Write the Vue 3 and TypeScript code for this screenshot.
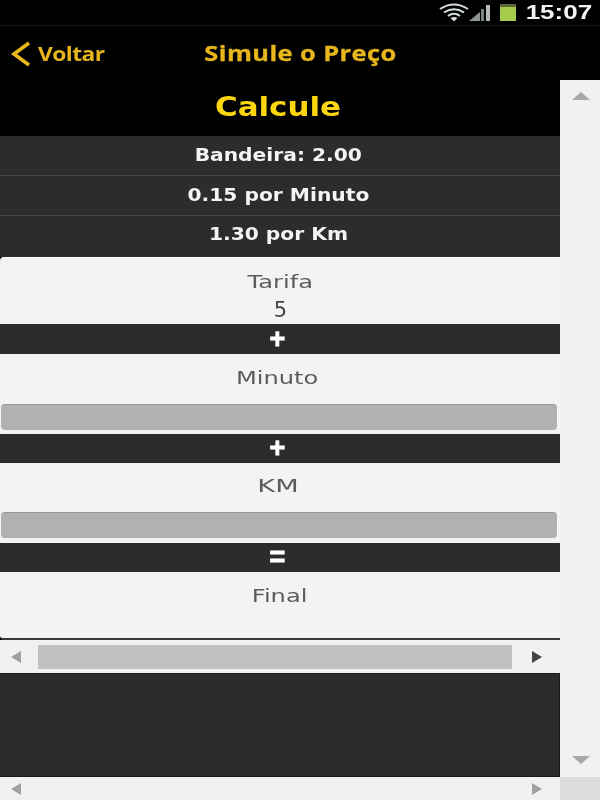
<script setup lang="ts">
const rates: string[] = ['Bandeira: 2.00', '0.15 por Minuto', '1.30 por Km']
</script>

<template>
  <div class="page">
    <div class="status">
      <svg class="wifi" width="30" height="19" viewBox="0 0 30 19" fill="none" stroke="#d5dcdc" stroke-width="2">
        <path d="M1 6 Q15 -3 29 6" />
        <path d="M5 9.500 Q15 3 25 9.500" />
        <path d="M9 13 Q15 8.500 21 13" />
        <path d="M15 18.500 L11.500 15 Q15 13 18.500 15 Z" fill="#d5dcdc" stroke="none" />
      </svg>
      <svg class="signal" width="22" height="18" viewBox="0 0 22 18">
        <path d="M0 17 L11 8 V17 Z" fill="#8d9494" />
        <rect x="12" y="5" width="3" height="12" fill="#7d8484" />
        <rect x="17" y="1" width="4" height="16" fill="#b4baba" />
      </svg>
      <div class="battery"><i></i></div>
      <span class="clock">15:07</span>
    </div>
    <div class="nav">
      <div class="back">
        <svg width="22" height="26" viewBox="0 0 22 26" fill="none" stroke="#eab91c" stroke-width="3.600">
          <path d="M19 2 L4 13 L19 24" />
        </svg>
        <span class="voltar">Voltar</span>
      </div>
      <div class="nav-title">Simule o Preço</div>
    </div>
    <div class="viewport">
      <div class="content">
        <h1 class="calc"><span>Calcule</span></h1>
        <div class="rates">
          <div v-for="r in rates" :key="r" class="rate"><span>{{ r }}</span></div>
        </div>
        <div class="card">
          <div class="field first">
            <div class="label">Tarifa</div>
            <div class="value">5</div>
          </div>
          <div class="op op-first">+</div>
          <div class="field">
            <div class="label label-min">Minuto</div>
            <div class="input"></div>
          </div>
          <div class="op">+</div>
          <div class="field">
            <div class="label label-km">KM</div>
            <div class="input"></div>
          </div>
          <div class="op op-eq">=</div>
          <div class="field last">
            <div class="label">Final</div>
          </div>
        </div>
        <div class="hscroll inner">
          <svg width="12" height="14" viewBox="0 0 12 14"><path d="M11 1 V13 L1 7 Z" fill="#a0a0a0" /></svg>
          <div class="thumb"></div>
          <svg width="12" height="14" viewBox="0 0 12 14"><path d="M1 1 V13 L11 7 Z" fill="#444" /></svg>
        </div>
        <div class="filler"></div>
      </div>
      <div class="vscroll">
        <svg width="20" height="10" viewBox="0 0 20 10"><path d="M10 1 L19 9 H1 Z" fill="#a8a8a8" /></svg>
        <svg width="20" height="10" viewBox="0 0 20 10"><path d="M1 1 H19 L10 9 Z" fill="#a8a8a8" /></svg>
      </div>
    </div>
    <div class="bottom">
      <div class="hscroll outer">
        <svg width="12" height="14" viewBox="0 0 12 14"><path d="M11 1 V13 L1 7 Z" fill="#a0a0a0" /></svg>
        <svg width="12" height="14" viewBox="0 0 12 14"><path d="M1 1 V13 L11 7 Z" fill="#a0a0a0" /></svg>
      </div>
      <div class="corner"></div>
    </div>
  </div>
</template>

<style scoped>
.page {
  width: 600px;
  height: 800px;
  background: #000;
  display: flex;
  flex-direction: column;
  overflow: hidden;
  filter: blur(0.45px);
  font-family: "Open Sans", "Liberation Sans", sans-serif;
}
.status {
  height: 25px;
  flex: none;
  display: flex;
  align-items: center;
  justify-content: flex-end;
  padding-right: 8px;
  border-bottom: 1px solid #161616;
}
.signal { margin-right: 9px; }
.battery {
  width: 16px;
  height: 17px;
  background: #5c6a3a;
  padding-top: 3px;
  box-sizing: border-box;
  margin-right: 25px;
}
.battery i {
  display: block;
  height: 14px;
  background: #a6cc4e;
}
.clock {
  color: #f2f2f2;
  font: 700 20px "Liberation Sans", sans-serif;
  transform: scaleX(1.3);
  transform-origin: right center;
}
.nav {
  height: 54px;
  flex: none;
  position: relative;
  display: flex;
  align-items: center;
  justify-content: center;
}
.back {
  position: absolute;
  left: 10px;
  top: 14px;
  display: flex;
  align-items: center;
  gap: 6px;
  color: #e6b61c;
  font: 700 20px "Open Sans", sans-serif;
  letter-spacing: -0.5px;
}
.back svg { display: block; }
.voltar {
  transform: scaleX(1.14);
  transform-origin: left center;
}
.nav-title {
  color: #e6b61c;
  font: 700 21px "Open Sans", sans-serif;
  letter-spacing: 0.35px;
  -webkit-text-stroke: 0.3px #e6b61c;
  transform: scaleX(1.21);
}
.viewport {
  flex: 1;
  min-height: 0;
  display: flex;
  background: #f1f1f1;
}
.content {
  width: 560px;
  flex: none;
  background: #000;
  display: flex;
  flex-direction: column;
}
.calc {
  margin: 0;
  height: 56px;
  text-align: center;
  color: #fcd60f;
  font: 800 26px/54px "DejaVu Sans", sans-serif;
  padding-right: 4px;
}
.calc span {
  display: inline-block;
  transform: scaleX(1.19);
}
.rates {
  height: 121px;
  background: #2d2c2c;
  display: flex;
  flex-direction: column;
}
.rate {
  flex: none;
  height: 40px;
  box-sizing: border-box;
  display: flex;
  align-items: center;
  justify-content: center;
  color: #f4f4f4;
  font: 700 17px "DejaVu Sans", sans-serif;
  padding: 0 3px 2px 0;
  border-bottom: 1px solid #444343;
}
.rate:last-child {
  flex: 1;
  border-bottom: 0;
  padding-bottom: 5px;
}
.rate span { transform: scaleX(1.19); }
.card {
  height: 383px;
  box-sizing: border-box;
  background: #f4f3f4;
  border-top: 1px solid #fff;
  border-bottom: 2px solid #3a3a3a;
  display: flex;
  flex-direction: column;
  border-radius: 4px 0 0 4px;
}
.field {
  flex: none;
  height: 80px;
  display: flex;
  flex-direction: column;
  align-items: center;
}
.field.first { height: 66px; }
.field.last { flex: 1; }
.label {
  color: #5c5c5c;
  font: 400 17px/22px "DejaVu Sans", sans-serif;
  margin-top: 13px;
  height: 22px;
  transform: scaleX(1.42);
}
.first .label { padding-left: 1px; }
.label-km {
  margin-top: 12px;
  padding-right: 3px;
  transform: scaleX(1.6);
}
.label-min { padding-right: 4px; }
.value {
  color: #444;
  font: 400 21px/24px "DejaVu Sans", sans-serif;
  margin-top: 5px;
  padding-left: 1px;
}
.input {
  align-self: stretch;
  height: 26px;
  margin: 15px 3px 0 1px;
  background: #b2b1b2;
  border-top: 1px solid #9a9a9a;
  box-sizing: border-box;
  border-radius: 4px;
}
.op {
  flex: none;
  height: 29px;
  background: #2d2c2c;
  display: flex;
  align-items: center;
  justify-content: center;
  color: #fff;
  -webkit-text-stroke: 0.8px #fff;
  font: 800 27px/29px "Liberation Sans", sans-serif;
  padding-right: 5px;
}
.op-first { height: 30px; }
.hscroll {
  display: flex;
  align-items: center;
  justify-content: space-between;
  box-sizing: border-box;
  background: #f1f1f1;
}
.inner {
  height: 33px;
  flex: none;
  padding: 0 17px 0 10px;
  gap: 16px;
}
.thumb {
  flex: 1;
  height: 24px;
  margin-right: 3px;
  background: #c1c1c1;
}
.filler {
  flex: 1;
  background: #2d2c2c;
  border: 1px solid #1a1a1a;
  border-left: 0;
}
.vscroll {
  flex: 1;
  display: flex;
  flex-direction: column;
  justify-content: space-between;
  align-items: center;
  padding: 11px 0 12px 2px;
}
.bottom {
  height: 23px;
  flex: none;
  display: flex;
}
.outer {
  width: 560px;
  padding: 0 17px 0 10px;
}
.corner {
  flex: 1;
  background: #dcdcdc;
}
</style>
